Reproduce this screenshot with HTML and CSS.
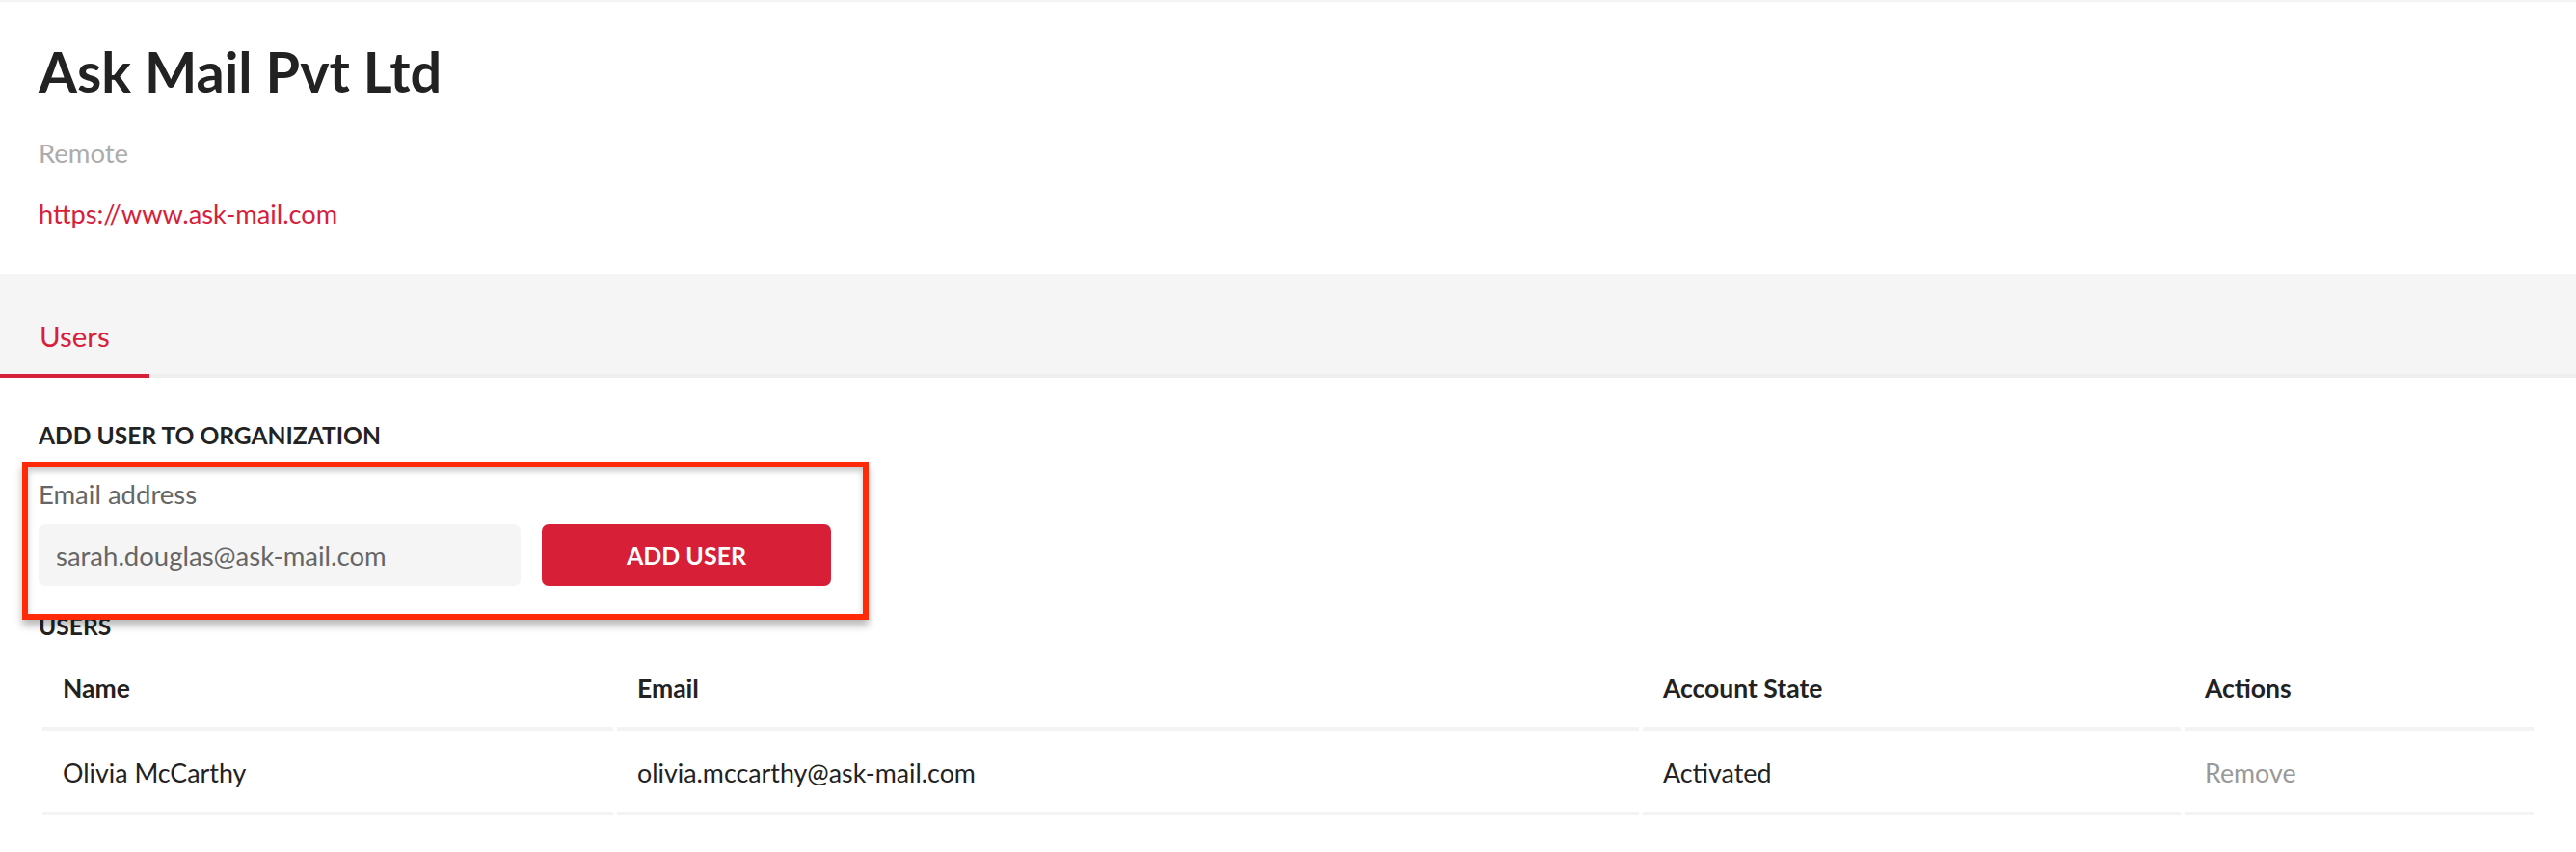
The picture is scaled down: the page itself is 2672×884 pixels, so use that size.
FILE: index.html
```html
<!DOCTYPE html>
<html lang="en">
<head>
<meta charset="utf-8">
<title>Ask Mail Pvt Ltd</title>
<link rel="stylesheet" href="styles.css">
</head>
<body>
<header class="org-header">
  <h1 class="org-title">Ask Mail Pvt Ltd</h1>
  <p class="org-location">Remote</p>
  <a class="org-link" href="#">https://www.ask-mail.com</a>
</header>

<nav class="tabs">
  <span class="tab tab-active">Users</span>
</nav>

<main class="section">
  <h2 class="section-title">ADD USER TO ORGANIZATION</h2>
  <div class="add-form">
    <label class="field-label">Email address</label>
    <div class="form-row">
      <div class="text-input">sarah.douglas@ask-mail.com</div>
      <button class="btn-primary">ADD USER</button>
    </div>
  </div>

  <h2 class="section-title users-title">USERS</h2>
  <table class="users-table">
    <thead>
      <tr>
        <th class="col-name">Name</th>
        <th class="col-email">Email</th>
        <th class="col-state">Account State</th>
        <th class="col-actions">Actions</th>
      </tr>
    </thead>
    <tbody>
      <tr>
        <td>Olivia McCarthy</td>
        <td>olivia.mccarthy@ask-mail.com</td>
        <td>Activated</td>
        <td class="action-link">Remove</td>
      </tr>
    </tbody>
  </table>

  <div class="highlight-box"></div>
</main>
</body>
</html>
```

FILE: styles.css
```css
* {
  box-sizing: border-box;
}

html, body {
  margin: 0;
  padding: 0;
  background: #ffffff;
}

body {
  font-family: "Lato", "Noto Sans", sans-serif;
  color: #222222;
  border-top: 2px solid #f4f4f4;
}

.org-header {
  padding: 37px 40px 0;
  height: 282px;
}

.org-title {
  margin: 0;
  font-size: 57.5px;
  font-weight: 700;
  line-height: 1.2;
  color: #222222;
}

.org-location {
  margin: 34px 0 0;
  font-size: 27.5px;
  line-height: 1.2;
  color: #acacac;
}

.org-link {
  display: block;
  margin-top: 31px;
  font-size: 27.2px;
  line-height: 1.2;
  color: #d7203a;
  text-decoration: none;
}

.tabs {
  display: flex;
  align-items: flex-end;
  height: 108px;
  background: #f5f5f5;
  border-bottom: 4px solid #eeeeee;
}

.tab {
  font-size: 29.5px;
  line-height: 1.2;
  padding: 0 41px 22px;
  margin-bottom: -4px;
}

.tab-active {
  color: #d7203a;
  border-bottom: 4px solid #d7203a;
}

.section {
  position: relative;
  padding: 45px 40px 40px;
}

.section-title {
  margin: 0;
  font-size: 24.6px;
  font-weight: 700;
  line-height: 30px;
  color: #222222;
}

.add-form {
  margin-top: 29px;
}

.field-label {
  display: block;
  font-size: 27.5px;
  line-height: 1.2;
  color: #666666;
}

.form-row {
  display: flex;
  gap: 22px;
  margin-top: 15px;
}

.text-input {
  width: 500px;
  height: 64px;
  background: #f5f5f5;
  border-radius: 7px;
  padding: 0 18px;
  display: flex;
  align-items: center;
  font-size: 27.5px;
  color: #666666;
}

.btn-primary {
  width: 300px;
  height: 64px;
  border: none;
  border-radius: 7px;
  background: #d72037;
  color: #ffffff;
  font-family: inherit;
  font-size: 25px;
  font-weight: 700;
}

.users-title {
  margin-top: 27px;
}

.users-table {
  margin-top: 5px;
  width: 100%;
  border-collapse: separate;
  border-spacing: 4px 0;
  font-size: 26.8px;
}

.users-table th,
.users-table td {
  text-align: left;
  padding: 28px 20px 24px 21px;
  line-height: 32px;
  border-bottom: 4px solid #f3f3f3;
}

.users-table th {
  font-size: 26.5px;
  font-weight: 700;
  color: #222222;
}

.users-table td {
  color: #222222;
}

.col-name { width: 592px; }
.col-email { width: 1060px; }
.col-state { width: 558px; }
.col-actions { width: 362px; }

.users-table td.action-link {
  color: #999999;
}

.highlight-box {
  position: absolute;
  left: 23px;
  top: 87px;
  width: 878px;
  height: 164px;
  border: 6px solid #ff2a08;
  box-shadow: 0 6px 8px rgba(0, 0, 0, 0.28), inset 0 4px 6px rgba(0, 0, 0, 0.22);
  pointer-events: none;
}
```
